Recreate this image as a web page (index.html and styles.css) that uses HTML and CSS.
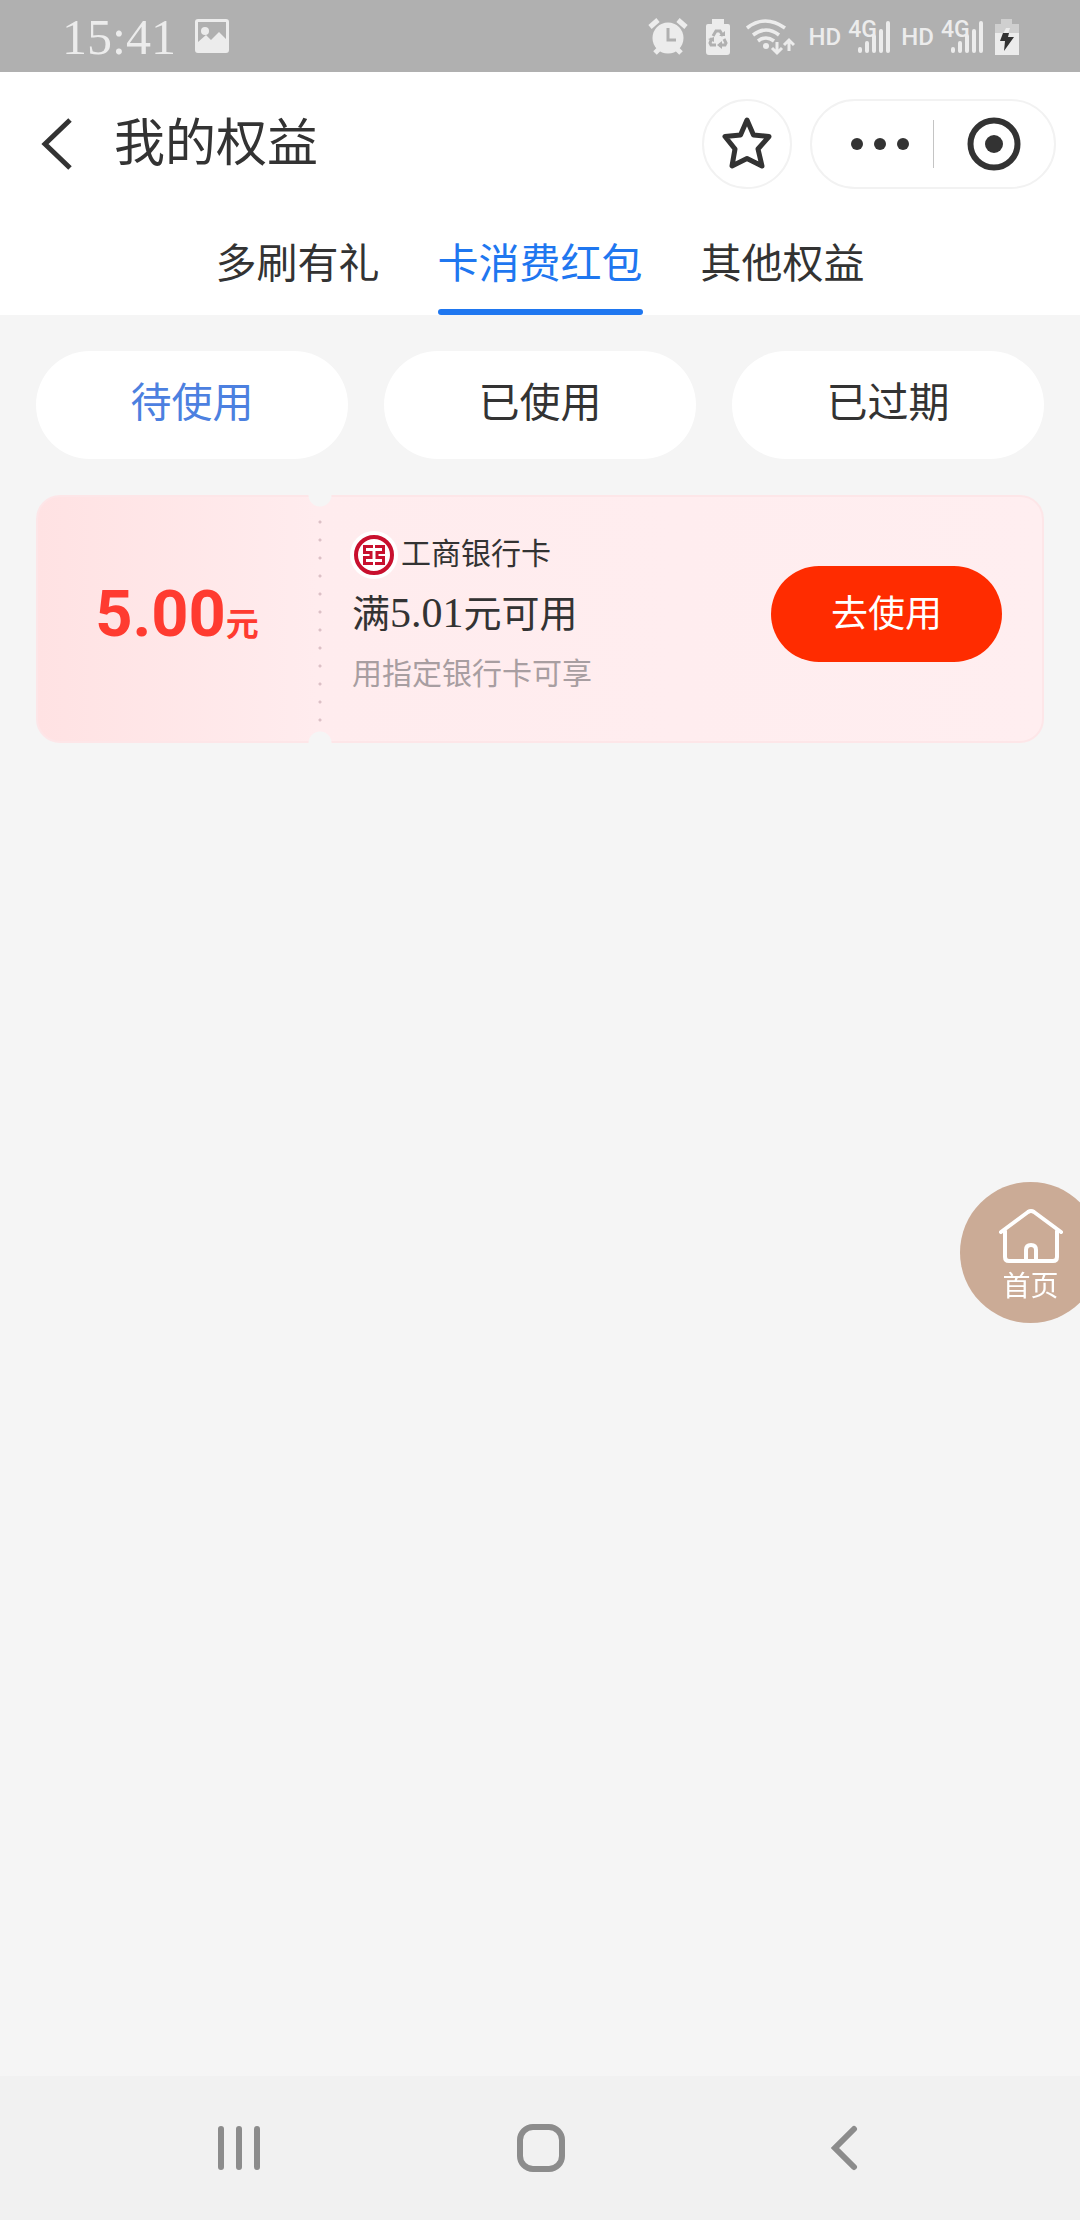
FILE: index.html
```html
<!DOCTYPE html>
<html lang="zh-CN">
<head>
<meta charset="utf-8">
<meta name="viewport" content="width=device-width, initial-scale=1">
<title>我的权益</title>
<link rel="stylesheet" href="styles.css">
</head>
<body>
<div class="status">
  <span class="status-time">15:41</span>
  <svg class="status-photo" width="36" height="36" viewBox="0 0 36 36"><path fill="#ececec" fill-rule="evenodd" d="M4 0h28a3 3 0 0 1 3 3v28a3 3 0 0 1-3 3H4a3 3 0 0 1-3-3V3a3 3 0 0 1 3-3zM4 3v20l8-7 5 5 8-8 7 7V3z"/><circle cx="11" cy="12" r="4" fill="#ececec"/></svg>
  <div class="status-icons">
    <svg width="40" height="38" viewBox="0 0 40 38" fill="none" stroke="#ececec"><circle cx="20" cy="20" r="15.500" fill="#ececec" stroke="none"/><path stroke-width="5" d="M2 9l8-7M30 2l8 7M7 35l4-4M33 35l-4-4"/><path stroke="#b0b0b0" stroke-width="3" d="M20 10v12h8"/></svg>
    <svg class="gap-a" width="26" height="38" viewBox="0 0 26 38"><path fill="#ececec" d="M7 1h12v5h4a2 2 0 0 1 2 2v26a3 3 0 0 1-3 3H4a3 3 0 0 1-3-3V8a2 2 0 0 1 2-2h4z"/><g fill="none" stroke="#b0b0b0" stroke-width="3"><path d="M8 18l3-5h4l3 5M7 20l-2 5 1 2h5M14 27h6l1-2-2-4"/></g><path fill="#b0b0b0" d="M14 18h6v-5zM12 27l5-4v8zM3 21l6-2v5z"/></svg>
    <svg class="gap-b" width="50" height="38" viewBox="0 0 50 38" fill="none" stroke="#ececec" stroke-width="3.500"><path d="M2 10q18-14 38 0M8 17q13-10 26 0M13 23q8-6 16 0"/><circle cx="21" cy="28" r="3" fill="#ececec" stroke="none"/><path stroke-width="3" d="M32 24v11M27 30l5 5 5-5M44 33V22M39 27l5-5 5 5"/></svg>
    <span class="hd">HD</span>
    <span class="signal"><span class="net">4G</span><svg width="34" height="34" viewBox="0 0 34 34" stroke="#ececec" stroke-width="4" stroke-linecap="round"><path d="M3 29v2M10 23v8M17 16v15M24 11v20M31 3v28"/></svg></span>
    <span class="hd">HD</span>
    <span class="signal"><span class="net">4G</span><svg width="34" height="34" viewBox="0 0 34 34" stroke="#ececec" stroke-width="4" stroke-linecap="round"><path d="M3 29v2M10 23v8M17 16v15M24 11v20M31 3v28"/></svg></span>
    <svg class="gap-c" width="26" height="38" viewBox="0 0 26 38"><path fill="#cfcfcf" d="M7 1h11v5h7v10H1V6h6z"/><path fill="#ececec" d="M1 15h24v22H1z"/><path fill="#ececec" d="M12 10h4l-2 6H9z"/><path fill="#333" d="M9 15h6l-1 4h6L10 33l1-10H6z"/></svg>
  </div>
</div>

<header class="header">
  <div class="titlebar">
    <button class="icon-btn back" aria-label="返回"><svg width="32" height="52" viewBox="0 0 32 52" fill="none" stroke="#333" stroke-width="5"><path d="M30 2L5 26l25 24"/></svg></button>
    <h1 class="title">我的权益</h1>
    <button class="icon-btn star" aria-label="收藏"><svg width="52" height="54" viewBox="0 2 52 54" fill="none" stroke="#333" stroke-width="5" stroke-linejoin="round"><path d="M26 5l6.500 15L48 21.500 37 34l4 17-15-7.500L11 51l3-17L4 21.500 19.500 20z"/></svg></button>
    <div class="capsule">
      <button class="icon-btn capsule-btn capsule-more" aria-label="更多"><svg width="58" height="12" viewBox="0 0 58 12" fill="#333"><circle cx="6" cy="6" r="6"/><circle cx="29" cy="6" r="6"/><circle cx="52" cy="6" r="6"/></svg></button>
      <button class="icon-btn capsule-btn" aria-label="关闭"><svg width="54" height="54" viewBox="0 0 54 54"><circle cx="27" cy="27" r="23.500" fill="none" stroke="#333" stroke-width="6"/><circle cx="27" cy="27" r="9" fill="#333"/></svg></button>
    </div>
  </div>
  <nav class="tabs">
    <a class="tab" href="#gifts">多刷有礼</a>
    <a class="tab tab-active" href="#coupons">卡消费红包</a>
    <a class="tab" href="#others">其他权益</a>
  </nav>
</header>

<main class="content" id="coupons">
  <div class="filters">
    <button class="filter filter-active">待使用</button>
    <button class="filter">已使用</button>
    <button class="filter">已过期</button>
  </div>
  <article class="coupon">
    <div class="amount"><span class="amount-num">5.00</span><span class="amount-unit">元</span></div>
    <div class="perforation"></div>
    <div class="info">
      <div class="bank">
        <svg class="bank-logo" width="48" height="48" viewBox="0 0 48 48"><circle cx="24" cy="24" r="24" fill="#fff"/><circle cx="24" cy="24" r="18" fill="none" stroke="#c8102e" stroke-width="4"/><path fill="none" stroke="#c8102e" stroke-width="3" d="M23 15.500h-8.500v6H21v5h-6.500v6H23M25 15.500h8.500v6H27v5h6.500v6H25"/></svg>
        <span>工商银行卡</span>
      </div>
      <div class="condition">满<span class="condition-num">5.01</span>元可用</div>
      <div class="note">用指定银行卡可享</div>
    </div>
    <button class="use">去使用</button>
  </article>
</main>

<a class="home" href="#home">
  <svg width="66" height="56" viewBox="0 0 66 56" fill="none" stroke="#fff" stroke-width="4" stroke-linecap="round" stroke-linejoin="round"><path d="M3 24L30 4q3-2 6 0l27 20M7 23v26q0 4 4 4h44q4 0 4-4V23M28 53V42q0-5 5-5t5 5v11"/></svg>
  <span>首页</span>
</a>

<footer class="sysnav">
  <button class="icon-btn" aria-label="最近任务"><svg width="44" height="48" viewBox="0 0 44 48" stroke="#8c8c8c" stroke-width="6" stroke-linecap="round"><path d="M4 5v38M22 5v38M40 5v38"/></svg></button>
  <button class="icon-btn" aria-label="主屏幕"><svg width="48" height="48" viewBox="0 0 48 48" fill="none" stroke="#8c8c8c" stroke-width="6"><rect x="3" y="3" width="42" height="42" rx="13"/></svg></button>
  <button class="icon-btn" aria-label="返回上一页"><svg width="28" height="48" viewBox="0 0 28 48" fill="none" stroke="#8c8c8c" stroke-width="6" stroke-linecap="round"><path d="M24 5L5 24l19 19"/></svg></button>
</footer>
</body>
</html>
```
FILE: styles.css
```css
* { box-sizing: border-box; }

body {
  margin: 0;
  min-height: 100vh;
  display: flex;
  flex-direction: column;
  background: #f5f5f5;
  color: #333;
  font-family: "Noto Sans CJK SC", sans-serif;
}

svg { display: block; flex: none; }

button {
  border: 0;
  padding: 0;
  margin: 0;
  background: none;
  color: inherit;
  font-family: inherit;
}

a { color: inherit; text-decoration: none; }

.icon-btn { display: flex; align-items: center; justify-content: center; }

/* System status bar */
.status {
  height: 72px;
  padding: 2px 60px 0 62px;
  display: flex;
  align-items: center;
  background: #b0b0b0;
  color: #ececec;
}
.status-time { font: 50px/70px "Liberation Serif", serif; }
.status-photo { margin-left: 18px; }
.status-icons { margin-left: auto; display: flex; align-items: center; }
.gap-a { margin-left: 17px; }
.gap-b { margin-left: 14px; }
.gap-c { margin-left: 10px; }
.hd { margin-left: 14px; font: 500 24px/24px Roboto, sans-serif; }
.signal { position: relative; padding-left: 16px; }
.signal + .hd { margin-left: 10px; }
.net {
  position: absolute;
  left: 7px;
  top: -2px;
  font: 500 23px/23px Roboto, sans-serif;
}

/* Title bar and tabs */
.header { background: #fff; }
.titlebar {
  height: 144px;
  padding: 0 24px 0 40px;
  display: flex;
  align-items: center;
}
.title {
  margin: 0 auto 0 42px;
  padding-bottom: 10px;
  font-size: 51px;
  line-height: 72px;
  font-weight: 400;
}
.star {
  width: 90px;
  height: 90px;
  border: 2px solid #f2f2f2;
  border-radius: 50%;
}
.capsule {
  width: 246px;
  height: 90px;
  margin-left: 18px;
  display: grid;
  grid-template-columns: 1fr 1fr;
  align-items: center;
  border: 2px solid #f2f2f2;
  border-radius: 45px;
}
.capsule-btn { height: 48px; }
.capsule-more { padding-left: 14px; }
.capsule-btn + .capsule-btn { border-left: 1px solid #c4c4c4; }
.tabs { display: flex; justify-content: center; gap: 58px; }
.tab { position: relative; padding: 14px 0 25px; font-size: 41px; line-height: 60px; }
.tab-active { color: #1f77f0; }
.tab-active::after {
  content: "";
  position: absolute;
  left: 0;
  right: 0;
  bottom: 0;
  height: 6px;
  border-radius: 3px;
  background: #1f77f0;
}

/* Coupon list */
.content { flex: 1; padding: 36px; }
.filters { display: grid; grid-template-columns: repeat(3, 1fr); gap: 36px; }
.filter {
  height: 108px;
  padding-bottom: 12px;
  border-radius: 54px;
  background: #fff;
  font-size: 41px;
}
.filter-active { color: #4c80e0; }

.coupon {
  position: relative;
  margin-top: 36px;
  padding: 24px 40px 34px 0;
  display: flex;
  align-items: center;
  border: 2px solid #fde6e8;
  border-radius: 24px;
  background: linear-gradient(90deg, #ffe2e3 0, #ffecee 280px, #ffeef0 100%);
}
.amount {
  width: 278px;
  display: flex;
  align-items: baseline;
  justify-content: center;
  color: #ff3b30;
}
.amount-num { font: 700 65px/84px Roboto, sans-serif; }
.amount-unit { font-size: 33px; line-height: 36px; font-weight: 700; }
.perforation {
  position: absolute;
  left: 270px;
  top: -2px;
  bottom: -2px;
  width: 24px;
  background:
    radial-gradient(circle at 12px 0, #f5f5f5 11px, transparent 12px) top / 24px 12px no-repeat border-box,
    radial-gradient(circle at 12px 12px, #f5f5f5 11px, transparent 12px) bottom / 24px 12px no-repeat border-box,
    radial-gradient(circle at 12px 9px, #dcc0c6 1px, transparent 2px) 0 0 / 24px 18px repeat-y content-box;
  padding: 18px 0 14px;
}
.info { margin-left: 36px; padding-bottom: 6px; }
.bank { display: flex; align-items: center; font-size: 30px; line-height: 60px; }
.bank-logo { margin: 8px 3px 0 -2px; }
.condition { height: 60px; font-size: 38px; line-height: 60px; }
.condition-num { font: 42px/42px "Liberation Serif", serif; }
.note { font-size: 30px; line-height: 60px; color: #a89ea1; }
.use {
  width: 231px;
  height: 96px;
  margin-left: auto;
  padding-bottom: 6px;
  border-radius: 48px;
  background: #ff2c00;
  color: #fff;
  font-size: 37px;
}

/* Floating shortcut, partly past the right edge */
.home {
  position: fixed;
  top: calc(50vh + 72px);
  right: -21px;
  width: 141px;
  height: 141px;
  padding-top: 26px;
  display: flex;
  flex-direction: column;
  align-items: center;
  border-radius: 50%;
  background: #cbab96;
  color: #fff;
  font-size: 28px;
  line-height: 40px;
}

/* System navigation */
.sysnav {
  height: 144px;
  padding: 0 85px 0 88px;
  display: grid;
  grid-template-columns: repeat(3, 1fr);
  background: #f1f1f1;
}
```
